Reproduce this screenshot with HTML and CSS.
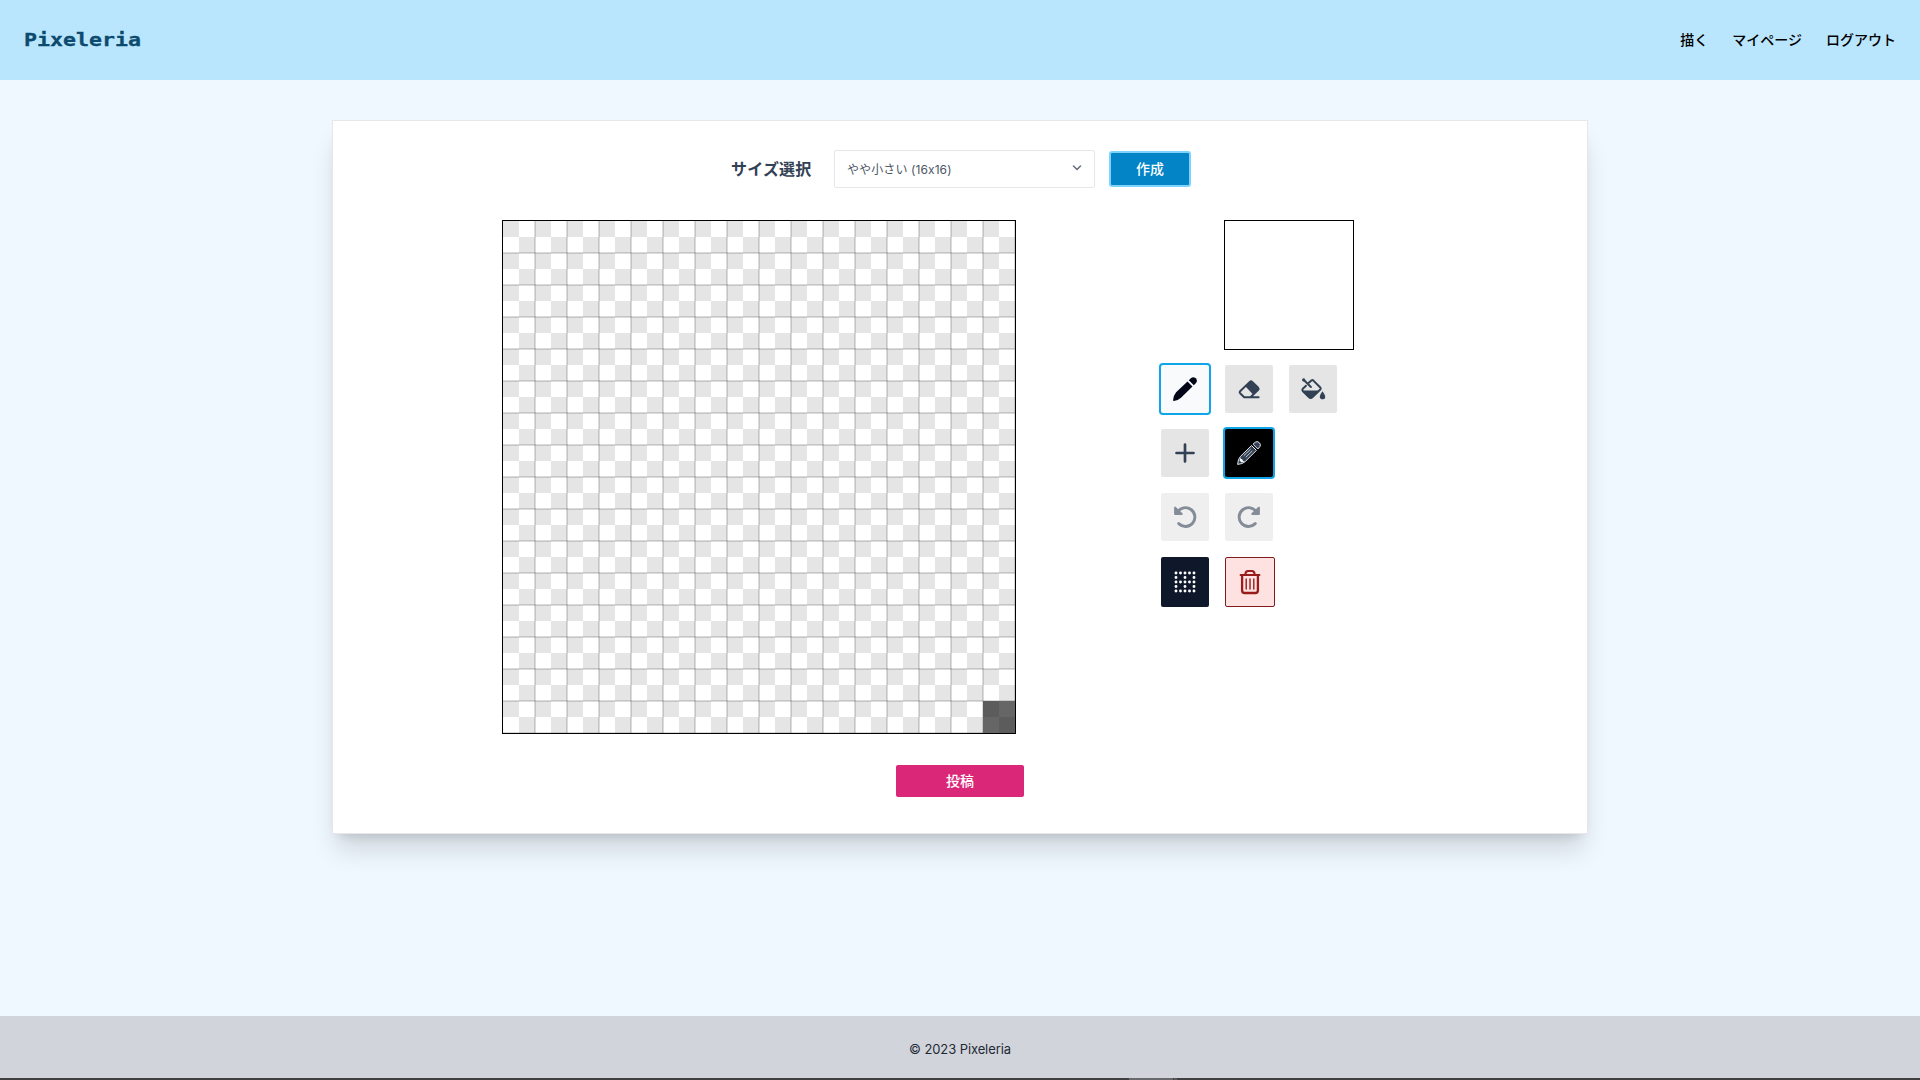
FILE: index.html
```html
<!DOCTYPE html>
<html lang="ja">
<head>
<meta charset="utf-8">
<title>Pixeleria</title>
<link rel="stylesheet" href="styles.css">
</head>
<body>
<header class="header">
  <div class="logo">Pixeleria</div>
  <nav class="nav"><a>描く</a><a>マイページ</a><a>ログアウト</a></nav>
</header>
<main class="main">
  <section class="card">
    <div class="size-row">
      <label class="size-label">サイズ選択</label>
      <div class="select"><span>やや小さい (16x16)</span>
        <svg width="10" height="6" viewBox="0 0 10 6" fill="none" stroke="#6b7280" stroke-width="1.6" stroke-linecap="round" stroke-linejoin="round"><path d="M1.5 1 5 4.5 8.500 1"/></svg>
      </div>
      <button class="create">作成</button>
    </div>
    <div class="workspace">
      <div class="canvas"><div class="cursor-cell"></div></div>
      <div class="side">
        <div class="preview"></div>
        <div class="tools">
          <div class="tool-row">
            <button class="tool selected-pen"><svg width="24" height="24" viewBox="0 0 24 24" fill="#020617"><path d="M15.800 3.200 18.100 1Q20.400-.8 22.700 1.300 25 3.700 23 6L20.800 8.200Z"/><path d="M14.500 4.500 19.500 9.500 8 20.800Q5.500 23.300.9 24 0 24 .1 23 .6 18.200 3.100 15.300Z"/></svg></button>
            <button class="tool"><svg width="24" height="24" viewBox="0 0 24 24" fill="none" stroke="#334155" stroke-width="2" stroke-linejoin="round" stroke-linecap="round"><path d="M21.600 20.200H7.200L3.100 16.200Q2.200 15.200 3.100 14.200L12.800 4.900Q14 3.900 15.200 4.900L21.200 10.800Q22.100 11.800 21.200 12.800L13.500 20.200"/><path d="M8.300 9.200 12.800 4.900Q14 3.900 15.200 4.900L21.200 10.800Q22.100 11.800 21.200 12.800L16 17.500Z" fill="#334155" stroke="none"/></svg></button>
            <button class="tool"><svg width="26" height="24" viewBox="0 0 26 24" fill="none" stroke="#334155" stroke-width="2" stroke-linejoin="round" stroke-linecap="round"><path d="M8.800 5.800 11.400 3.500Q12.400 2.700 13.400 3.600L20.300 10.500Q21.200 11.500 20.300 12.500L12 20.500Q10.700 21.500 9.400 20.500L2.800 14.100Q1.800 12.900 2.800 11.700L6 8.800"/><path d="M3.600 2.800 10.900 10"/><path d="M2.800 14.300H18.400L12 20.500Q10.700 21.500 9.400 20.500Z" fill="#334155" stroke-width="1.400"/><path d="M22.500 14.300Q18.200 20 20.600 21.700 22.500 23 24.500 21.700 26.700 20 22.500 14.300Z" fill="#334155" stroke="none"/><circle cx="3.700" cy="2.900" r="1.600" fill="#334155" stroke="none"/></svg></button>
          </div>
          <div class="tool-row">
            <button class="tool"><svg width="24" height="24" viewBox="0 0 24 24" stroke="#334155" stroke-width="2.700" stroke-linecap="round"><path d="M12 3.500V20.500M3.500 12H20.500"/></svg></button>
            <button class="tool selected-color"><svg width="24" height="24" viewBox="0 0 24 24" fill="#334155" stroke="#e5e7eb" stroke-width="1" stroke-linejoin="round"><path d="M16 3.200 18.300 1.200Q20.400-.3 22.300 1.700 24.300 3.600 22.900 5.700L20.800 8Z"/><path d="M14.500 4.500 19.400 9.400 8 20.800Q5.500 23 .6 23.400 1 18.200 3.200 15.700Z"/><path d="M13.600 8.200 6.800 14.700M15.300 9.900 8.800 16.300" stroke-width=".8"/><path d="M3.400 16.500Q3.500 18 5.200 18.300 5.500 20 7.500 20.500L4.600 21.500 2.500 19.500Z" fill="#f8fafc" stroke="none"/></svg></button>
          </div>
          <div class="tool-row">
            <button class="tool disabled"><svg width="24" height="24" viewBox="0 0 24 24" fill="none" stroke="#334155" stroke-width="2.900" stroke-linecap="round"><path d="M4.400 7.200A9.400 9.400 0 1 1 5.700 18.600"/><path d="M2.100 2.600V9H8.700Z" fill="#334155" stroke-width="2" stroke-linejoin="round"/></svg></button>
            <button class="tool disabled"><svg class="redo" width="24" height="24" viewBox="0 0 24 24" fill="none" stroke="#334155" stroke-width="2.900" stroke-linecap="round"><path d="M4.400 7.200A9.400 9.400 0 1 1 5.700 18.600"/><path d="M2.100 2.600V9H8.700Z" fill="#334155" stroke-width="2" stroke-linejoin="round"/></svg></button>
          </div>
          <div class="tool-row">
            <button class="tool grid-toggle"><svg width="24" height="24" viewBox="0 0 24 24" stroke="#fff" stroke-width="2.900" stroke-linecap="round"><path d="M3 3h0M7.500 3h0M12 3h0M16.500 3h0M21 3h0M3 7.500h0M12 7.500h0M21 7.500h0M3 12h0M7.500 12h0M12 12h0M16.500 12h0M21 12h0M3 16.500h0M12 16.500h0M21 16.500h0M3 21h0M7.500 21h0M12 21h0M16.500 21h0M21 21h0"/></svg></button>
            <button class="tool trash"><svg width="24" height="24" viewBox="0 0 24 24" fill="none" stroke="#991b1b" stroke-linecap="round" stroke-linejoin="round"><path d="M2.600 5H21.400" stroke-width="2.100"/><path d="M7.300 4.500Q7.600 1 10 1H14Q16.400 1 16.700 4.500" stroke-width="2.100"/><path d="M4.100 5.500V20.500Q4.100 23 6.600 23H17.400Q19.900 23 19.900 20.500V5.500" stroke-width="2.300"/><path d="M8.200 9V19M12 9V19M15.800 9V19" stroke-width="1.400"/></svg></button>
          </div>
        </div>
      </div>
    </div>
    <button class="submit">投稿</button>
  </section>
</main>
<footer class="footer">© 2023 Pixeleria</footer>
<div class="bottom-edge"><span class="edge-wide"></span><span class="edge-narrow"></span></div>
</body>
</html>
```
FILE: styles.css
```css
* { box-sizing: border-box; }
body {
  margin: 0;
  height: 1080px;
  overflow: hidden;
  display: flex;
  flex-direction: column;
  background: #f0f8ff;
  font-family: Inter, "Noto Sans CJK JP", sans-serif;
  color: #1f2937;
}
button { border: 0; padding: 0; font-family: inherit; display: flex; align-items: center; justify-content: center; }
svg { display: block; overflow: visible; flex: none; }
.header {
  height: 80px;
  flex: none;
  padding: 0 24px;
  display: flex;
  align-items: center;
  justify-content: space-between;
  background: #bae6fd;
}
.logo {
  font: bold 18px/28px "DejaVu Sans Mono", monospace;
  transform: scaleX(1.2);
  transform-origin: left;
  -webkit-text-stroke: .3px #0c4a6e;
  color: #0c4a6e;
}
.nav { display: flex; gap: 24px; font-size: 14px; line-height: 20px; font-weight: 500; color: #000; }
.main { flex: 1; padding-top: 40px; }
.card {
  width: 1256px;
  height: 714px;
  margin: 0 auto;
  padding-top: 29px;
  display: flex;
  flex-direction: column;
  border: 1px solid #e5e7eb;
  background: #fff;
  box-shadow: 0 20px 25px -5px rgba(0, 0, 0, .14), 0 8px 10px -6px rgba(0, 0, 0, .12);
}
.size-row { display: flex; align-items: center; padding-left: 398px; height: 38px; }
.size-label { width: 103px; font-size: 16px; font-weight: 700; line-height: 24px; letter-spacing: .2px; color: #334155; }
.select {
  width: 261px;
  height: 38px;
  padding: 0 12px 2px;
  display: flex;
  align-items: center;
  justify-content: space-between;
  border: 1px solid #e5e7eb;
  border-radius: 2px;
  font-size: 12px;
  letter-spacing: .1px;
  color: #4b5563;
}
.create {
  width: 82px;
  height: 36px;
  margin-left: 14px;
  padding-bottom: 2px;
  border: 2px solid #7dd3fc;
  border-radius: 3px;
  background: #0284c7;
  color: #fff;
  font-size: 14px;
  font-weight: 500;
}
.workspace { display: flex; gap: 143px; margin-top: 32px; padding-left: 169px; }
.canvas {
  width: 514px;
  height: 514px;
  display: flex;
  align-items: flex-end;
  justify-content: flex-end;
  border: 1px solid #000;
  background:
    repeating-linear-gradient(90deg, rgba(0, 0, 0, .14) 0 1px, transparent 1px 32px) 32px 0 / 480px 512px no-repeat,
    repeating-linear-gradient(rgba(0, 0, 0, .14) 0 1px, transparent 1px 32px) 0 32px / 512px 480px no-repeat,
    linear-gradient(90deg, transparent 31px, rgba(0, 0, 0, .14) 31px) 0 0 / 32px 32px,
    linear-gradient(transparent 31px, rgba(0, 0, 0, .14) 31px) 0 0 / 32px 32px,
    conic-gradient(#fff 25%, #e5e5e5 0 50%, #fff 0 75%, #e5e5e5 0) 0 0 / 32px 32px;
}
.cursor-cell {
  width: 32px;
  height: 32px;
  background:
    linear-gradient(rgba(0, 0, 0, .6), rgba(0, 0, 0, .6)),
    conic-gradient(#fff 25%, #e5e5e5 0 50%, #fff 0 75%, #e5e5e5 0);
}
.side { padding-left: 2px; }
.preview { width: 130px; height: 130px; margin-left: 63px; border: 1px solid #000; }
.tools { display: flex; flex-direction: column; gap: 16px; margin-top: 15px; }
.tool-row { display: flex; gap: 16px; }
.tool { width: 48px; height: 48px; border-radius: 2px; background: #e5e5e5; }
.selected-pen { background: #f8fafc; box-shadow: 0 0 0 2px #0ea5e9; }
.selected-color { background: #000; box-shadow: 0 0 0 2px #0ea5e9; }
.disabled { opacity: .6; }
.redo { transform: scaleX(-1); }
.grid-toggle { height: 50px; background: #0f172a; }
.trash { width: 50px; height: 50px; border: 1px solid #7f1d1d; background: #fee2e2; }
.submit {
  width: 128px;
  height: 32px;
  margin: 31px 0 0 563px;
  padding-bottom: 2px;
  border-radius: 2px;
  background: #db2777;
  color: #fff;
  font-size: 14px;
  font-weight: 500;
}
.footer {
  height: 62px;
  flex: none;
  display: flex;
  align-items: center;
  justify-content: center;
  padding-top: 4px;
  background: #d1d5db;
  font-size: 13px;
  letter-spacing: -.1px;
}
.bottom-edge { height: 2px; flex: none; display: flex; gap: 1px; padding-left: 1129px; background: #404040; }
.edge-wide { width: 44px; background: #68696c; }
.edge-narrow { width: 3px; background: #58595c; }
```
